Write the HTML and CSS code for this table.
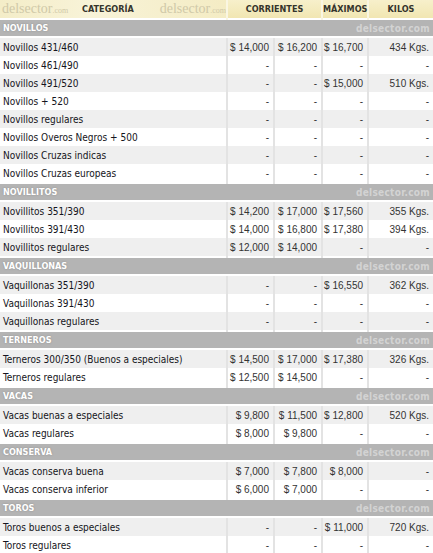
FILE: index.html
```html
<!DOCTYPE html>
<html lang="es">
<head>
  <meta charset="UTF-8">
  <title>Precios de hacienda - delsector.com</title>
  <link rel="stylesheet" href="styles.css">
</head>
<body>
  <table class="precios">
    <colgroup>
      <col class="c-cat">
      <col class="c-min">
      <col class="c-max">
      <col class="c-top">
      <col class="c-kg">
    </colgroup>
    <thead>
      <tr>
        <th class="head-cat">
          <div class="head-cat-in">
            <span class="logo">delsector<small>.com</small></span>
            <span>CATEGORÍA</span>
            <span class="logo logo-r">delsector<small>.com</small></span>
          </div>
        </th>
        <th colspan="2">CORRIENTES</th>
        <th>MÁXIMOS</th>
        <th>KILOS</th>
      </tr>
    </thead>

    <tbody>
      <tr class="sec"><td colspan="5"><div class="sec-in"><span>NOVILLOS</span><span class="marca">delsector.com</span></div></td></tr>
      <tr><td class="cat">Novillos 431/460</td><td class="num">$ 14,000</td><td class="num">$ 16,200</td><td class="num">$ 16,700</td><td class="num">434 Kgs.</td></tr>
      <tr><td class="cat">Novillos 461/490</td><td class="num">-</td><td class="num">-</td><td class="num">-</td><td class="num">-</td></tr>
      <tr><td class="cat">Novillos 491/520</td><td class="num">-</td><td class="num">-</td><td class="num">$ 15,000</td><td class="num">510 Kgs.</td></tr>
      <tr><td class="cat">Novillos + 520</td><td class="num">-</td><td class="num">-</td><td class="num">-</td><td class="num">-</td></tr>
      <tr><td class="cat">Novillos regulares</td><td class="num">-</td><td class="num">-</td><td class="num">-</td><td class="num">-</td></tr>
      <tr><td class="cat">Novillos Overos Negros + 500</td><td class="num">-</td><td class="num">-</td><td class="num">-</td><td class="num">-</td></tr>
      <tr><td class="cat">Novillos Cruzas indicas</td><td class="num">-</td><td class="num">-</td><td class="num">-</td><td class="num">-</td></tr>
      <tr><td class="cat">Novillos Cruzas europeas</td><td class="num">-</td><td class="num">-</td><td class="num">-</td><td class="num">-</td></tr>
    </tbody>

    <tbody>
      <tr class="sec"><td colspan="5"><div class="sec-in"><span>NOVILLITOS</span><span class="marca">delsector.com</span></div></td></tr>
      <tr><td class="cat">Novillitos 351/390</td><td class="num">$ 14,200</td><td class="num">$ 17,000</td><td class="num">$ 17,560</td><td class="num">355 Kgs.</td></tr>
      <tr><td class="cat">Novillitos 391/430</td><td class="num">$ 14,000</td><td class="num">$ 16,800</td><td class="num">$ 17,380</td><td class="num">394 Kgs.</td></tr>
      <tr><td class="cat">Novillitos regulares</td><td class="num">$ 12,000</td><td class="num">$ 14,000</td><td class="num">-</td><td class="num">-</td></tr>
    </tbody>

    <tbody>
      <tr class="sec"><td colspan="5"><div class="sec-in"><span>VAQUILLONAS</span><span class="marca">delsector.com</span></div></td></tr>
      <tr><td class="cat">Vaquillonas 351/390</td><td class="num">-</td><td class="num">-</td><td class="num">$ 16,550</td><td class="num">362 Kgs.</td></tr>
      <tr><td class="cat">Vaquillonas 391/430</td><td class="num">-</td><td class="num">-</td><td class="num">-</td><td class="num">-</td></tr>
      <tr><td class="cat">Vaquillonas regulares</td><td class="num">-</td><td class="num">-</td><td class="num">-</td><td class="num">-</td></tr>
    </tbody>

    <tbody>
      <tr class="sec"><td colspan="5"><div class="sec-in"><span>TERNEROS</span><span class="marca">delsector.com</span></div></td></tr>
      <tr><td class="cat">Terneros 300/350 (Buenos a especiales)</td><td class="num">$ 14,500</td><td class="num">$ 17,000</td><td class="num">$ 17,380</td><td class="num">326 Kgs.</td></tr>
      <tr><td class="cat">Terneros regulares</td><td class="num">$ 12,500</td><td class="num">$ 14,500</td><td class="num">-</td><td class="num">-</td></tr>
    </tbody>

    <tbody>
      <tr class="sec"><td colspan="5"><div class="sec-in"><span>VACAS</span><span class="marca">delsector.com</span></div></td></tr>
      <tr><td class="cat">Vacas buenas a especiales</td><td class="num">$ 9,800</td><td class="num">$ 11,500</td><td class="num">$ 12,800</td><td class="num">520 Kgs.</td></tr>
      <tr><td class="cat">Vacas regulares</td><td class="num">$ 8,000</td><td class="num">$ 9,800</td><td class="num">-</td><td class="num">-</td></tr>
    </tbody>

    <tbody>
      <tr class="sec"><td colspan="5"><div class="sec-in"><span>CONSERVA</span><span class="marca">delsector.com</span></div></td></tr>
      <tr><td class="cat">Vacas conserva buena</td><td class="num">$ 7,000</td><td class="num">$ 7,800</td><td class="num">$ 8,000</td><td class="num">-</td></tr>
      <tr><td class="cat">Vacas conserva inferior</td><td class="num">$ 6,000</td><td class="num">$ 7,000</td><td class="num">-</td><td class="num">-</td></tr>
    </tbody>

    <tbody>
      <tr class="sec"><td colspan="5"><div class="sec-in"><span>TOROS</span><span class="marca">delsector.com</span></div></td></tr>
      <tr><td class="cat">Toros buenos a especiales</td><td class="num">-</td><td class="num">-</td><td class="num">$ 11,000</td><td class="num">720 Kgs.</td></tr>
      <tr><td class="cat">Toros regulares</td><td class="num">-</td><td class="num">-</td><td class="num">-</td><td class="num">-</td></tr>
    </tbody>
  </table>
</body>
</html>
```

FILE: styles.css
```css
/* Tabla de precios */
body {
  margin: 0;
  background: #fff;
}

.precios {
  width: 433px;
  border-collapse: collapse;
  table-layout: fixed;
}

.c-cat { width: 227px; }
.c-min { width: 47px; }
.c-max { width: 48px; }
.c-top { width: 46px; }
.c-kg  { width: 65px; }

/* Cabecera */
thead th {
  height: 18px;
  padding: 0;
  background: linear-gradient(#f7f0cb, #f1e6b2);
  border-left: 2px solid #faf6e2;
  font-family: "DejaVu Sans Condensed", "DejaVu Sans", sans-serif;
  font-size: 9px;
  font-weight: bold;
  color: #35342c;
  text-align: center;
  white-space: nowrap;
}

thead th.head-cat {
  border-left: none;
  background: linear-gradient(90deg, #f4edc8, #f8f3d8 40%, #f4ecc4);
  overflow: hidden;
}

.head-cat-in {
  display: grid;
  grid-template-columns: 1fr auto 1fr;
  align-items: center;
}

.logo {
  font-family: "Liberation Serif", serif;
  font-size: 14px;
  font-weight: normal;
  color: #d0c9a8;
  text-align: left;
  padding-left: 2px;
}

.logo small {
  font-size: 8px;
}

.logo-r {
  padding-left: 26px;
}

/* Franja de seccion */
.sec td {
  height: 16px;
  padding: 0 3px;
  background: #b4b4b4;
  border-top: 2px solid #fff;
  border-bottom: 2px solid #fff;
}

.sec-in {
  display: flex;
  justify-content: space-between;
  align-items: center;
  font-family: "DejaVu Sans Condensed", "DejaVu Sans", sans-serif;
  font-size: 9px;
  font-weight: bold;
  color: #fff;
  text-shadow: 0 0 2px #8c8c8c;
}

.sec-in .marca {
  color: #d3d3d3;
  font-size: 10px;
  letter-spacing: 0.3px;
  text-shadow: none;
}

/* Filas de datos */
tbody tr:nth-child(even) td {
  background: #efefef;
}

tbody td {
  height: 18px;
  padding: 0;
  white-space: nowrap;
  overflow: hidden;
}

td.cat {
  padding-left: 3px;
  font-family: "DejaVu Sans Condensed", "DejaVu Sans", sans-serif;
  font-size: 10px;
  color: #141420;
}

td.num {
  padding-right: 4px;
  border-left: 2px solid #e3e3e3;
  font-family: "Liberation Sans", Arial, sans-serif;
  font-size: 10px;
  color: #333;
  text-align: right;
}
```
